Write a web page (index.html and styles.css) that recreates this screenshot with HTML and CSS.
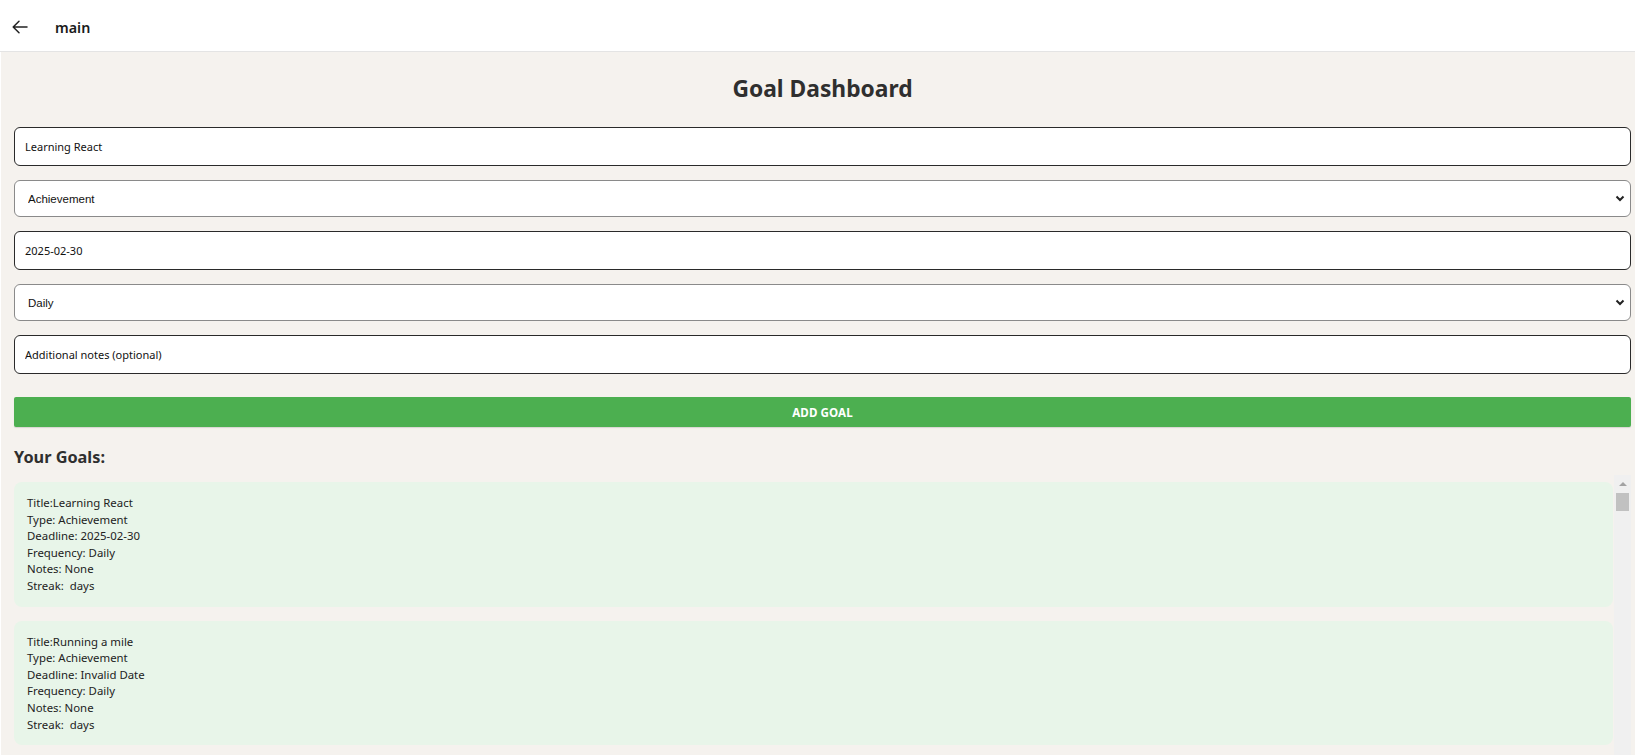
FILE: index.html
```html
<!DOCTYPE html>
<html lang="en">
<head>
<meta charset="utf-8">
<title>main</title>
<link rel="stylesheet" href="styles.css">
</head>
<body>
<div class="app">
  <header class="topbar">
    <button class="back" aria-label="Back">
      <svg width="16" height="14" viewBox="0 0 16 14" fill="none" stroke="#222" stroke-width="1.5" stroke-linecap="round" stroke-linejoin="round"><path d="M15 7H1.5M7 1.2L1.2 7 7 12.8"/></svg>
    </button>
    <span class="topbar-title">main</span>
  </header>
  <main class="page">
    <h1 class="title">Goal Dashboard</h1>
    <form class="form">
      <input class="field field-text" type="text" value="Learning React">
      <div class="select-wrap">
        <select class="field field-select"><option>Achievement</option></select>
        <svg class="chev" width="10" height="7" viewBox="0 0 10 7" fill="none" stroke="#222" stroke-width="2"><path d="M1.5 1.5L5 5 8.5 1.5"/></svg>
      </div>
      <input class="field field-text" type="text" value="2025-02-30">
      <div class="select-wrap">
        <select class="field field-select"><option>Daily</option></select>
        <svg class="chev" width="10" height="7" viewBox="0 0 10 7" fill="none" stroke="#222" stroke-width="2"><path d="M1.5 1.5L5 5 8.5 1.5"/></svg>
      </div>
      <input class="field field-text field-notes" type="text" placeholder="Additional notes (optional)">
      <button type="button" class="add-btn">ADD GOAL</button>
    </form>
    <h2 class="goals-heading">Your Goals:</h2>
    <div class="goals-area">
      <div class="goals-list">
        <div class="goal-card"><div>Title:Learning React</div><div>Type: Achievement</div><div>Deadline: 2025-02-30</div><div>Frequency: Daily</div><div>Notes: None</div><div>Streak:&nbsp; days</div></div>
        <div class="goal-card"><div>Title:Running a mile</div><div>Type: Achievement</div><div>Deadline: Invalid Date</div><div>Frequency: Daily</div><div>Notes: None</div><div>Streak:&nbsp; days</div></div>
      </div>
      <div class="scrollbar" aria-hidden="true">
        <div class="scroll-up"></div>
        <div class="scroll-thumb"></div>
      </div>
    </div>
  </main>
</div>
</body>
</html>
```
FILE: styles.css
```css
* { box-sizing: border-box; }
html, body { margin: 0; padding: 0; height: 100%; overflow: hidden; }
body {
  background: #ffffff;
  font-family: "Noto Sans", "Open Sans", "Liberation Sans", sans-serif;
  color: #333;
}
.app {
  display: flex;
  flex-direction: column;
  height: 100vh;
}
.topbar {
  flex: none;
  height: 52px;
  display: flex;
  align-items: center;
  background: #fff;
  border-bottom: 1px solid #e4e4e4;
  padding-left: 11px;
  padding-top: 3px;
}
.back {
  border: 0;
  background: transparent;
  padding: 0;
  width: 18px;
  height: 16px;
  display: flex;
  align-items: center;
  justify-content: center;
  margin-right: 26px;
}
.topbar-title {
  font-size: 14.3px;
  font-weight: 600;
  color: #1b1b1b;
}
.page {
  flex: 1;
  min-height: 0;
  display: flex;
  flex-direction: column;
  background: #f5f2ee;
  margin-left: 1px;
  padding: 0 4px 0 13px;
}
.title {
  margin: 21px 0 0;
  height: 32px;
  line-height: 32px;
  text-align: center;
  font-size: 22.8px;
  font-weight: 700;
  color: #2f2f2f;
}
.form {
  display: flex;
  flex-direction: column;
  margin-top: 22px;
}
.field {
  display: block;
  width: 100%;
  background: #fff;
  margin: 0 0 14px;
  outline: none;
}
.field-text {
  height: 39px;
  border: 1px solid #2a2a2a;
  border-radius: 6px;
  padding: 0 10px;
  font-family: "Noto Sans", "Open Sans", sans-serif;
  font-size: 11px;
  color: #111;
}
.field-text::placeholder { color: #111; opacity: 1; }
.field-notes { margin-bottom: 23px; }
.select-wrap { position: relative; }
.field-select {
  -webkit-appearance: none;
  appearance: none;
  height: 37px;
  border: 1px solid #8a8a8a;
  border-radius: 6px;
  padding: 0 13px;
  font-family: "Liberation Sans", Arial, sans-serif;
  font-size: 11.5px;
  color: #111;
}
.chev {
  position: absolute;
  right: 6px;
  top: 15px;
  pointer-events: none;
}
.add-btn {
  height: 30px;
  width: 100%;
  border: 0;
  border-radius: 2px;
  background: #4caf50;
  color: #fff;
  font-family: "Noto Sans", "Open Sans", sans-serif;
  font-size: 11.6px;
  font-weight: 700;
  letter-spacing: 0.1px;
  box-shadow: 0 1px 1px rgba(0,0,0,0.12);
}
.goals-heading {
  margin: 19px 0 0;
  height: 22px;
  line-height: 22px;
  font-size: 16.3px;
  font-weight: 700;
  color: #2f2f2f;
}
.goals-area {
  flex: 1;
  min-height: 0;
  margin-top: 7px;
  display: flex;
  align-items: stretch;
}
.goals-list {
  flex: 1;
  min-width: 0;
  overflow: hidden;
  padding-top: 7px;
  padding-right: 1px;
}
.goal-card {
  background: #e8f5e9;
  border-radius: 8px;
  padding: 13px 13px 12px;
  margin-bottom: 14px;
  font-size: 11.4px;
  line-height: 16.6px;
  color: #222;
}
.scrollbar {
  flex: none;
  width: 17px;
  background: #f0f0f0;
  display: flex;
  flex-direction: column;
  align-items: center;
}
.scroll-up {
  margin-top: 7px;
  width: 0;
  height: 0;
  border-left: 4px solid transparent;
  border-right: 4px solid transparent;
  border-bottom: 4px solid #a3a3a3;
}
.scroll-thumb {
  margin-top: 7px;
  width: 13px;
  height: 18px;
  background: #c1c1c1;
}
```
